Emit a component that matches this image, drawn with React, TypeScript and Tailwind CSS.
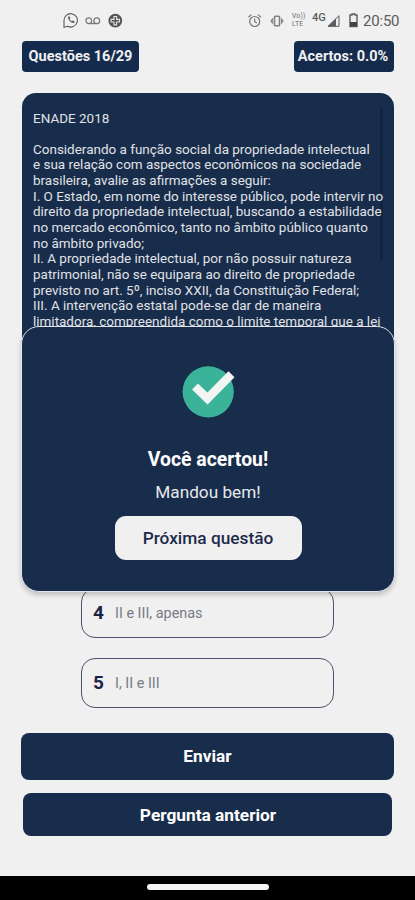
import { FC } from 'react';

const QUESTION_LINES = [
  'ENADE 2018',
  '',
  'Considerando a função social da propriedade intelectual',
  'e sua relação com aspectos econômicos na sociedade',
  'brasileira, avalie as afirmações a seguir:',
  'I. O Estado, em nome do interesse público, pode intervir no',
  'direito da propriedade intelectual, buscando a estabilidade',
  'no mercado econômico, tanto no âmbito público quanto',
  'no âmbito privado;',
  'II. A propriedade intelectual, por não possuir natureza',
  'patrimonial, não se equipara ao direito de propriedade',
  'previsto no art. 5º, inciso XXII, da Constituição Federal;',
  'III. A intervenção estatal pode-se dar de maneira',
  'limitadora, compreendida como o limite temporal que a lei',
];

const StatusBar: FC = () => (
  <div className="flex h-[41px] shrink-0 pt-[12px] text-[#5c5c5c]">
    <svg className="ml-[63px] h-4 w-4" viewBox="0 0 16 16" fill="none" stroke="currentColor" strokeWidth="1.1">
      <path d="M1 15.300V8.500A6.700 6.700 0 1 1 4.600 14.300z" />
      <path d="M5.300 4.600c-.7 1.500.2 3.200 1.700 4.600s3.100 2.200 4.400 1.300l.1-1.300-1.700-.8-.9.900C7.800 8.900 7 8 6.600 7.100l.8-.9-.7-1.700z" fill="currentColor" stroke="none" />
    </svg>
    <svg className="ml-[6px] h-4 w-4" viewBox="0 0 16 16" fill="none" stroke="#777" strokeWidth="1.2">
      <circle cx="3.800" cy="8.700" r="2.900" />
      <circle cx="11.800" cy="8.700" r="2.900" />
      <path d="M3.800 11.600h8" />
    </svg>
    <svg className="ml-[7px] h-4 w-4" viewBox="0 0 16 16">
      <circle cx="7.300" cy="8.700" r="6.900" fill="#555" />
      <g fill="none" stroke="#e4e4e4" strokeWidth="1.100">
        <path d="M6 4.500h2.600v2.900h2.900V10H8.600v2.900H6V10H3.100V7.400H6z" />
      </g>
    </svg>

    <svg className="ml-[123px] h-4 w-4" viewBox="0 0 16 16" fill="none" stroke="#777" strokeWidth="1.200">
      <circle cx="7.700" cy="9.500" r="5" />
      <path d="M7.700 6.500v3.200l2.200 1.300M1.500 5.200l2.900-2.600M13.900 5.200L11 2.600" />
    </svg>
    <svg className="ml-[6px] h-4 w-4" viewBox="0 0 16 16" fill="#8a8a8a" stroke="#808080" strokeWidth="1.200">
      <rect x="5.500" y="4.200" width="5" height="9.600" rx=".8" fill="none" strokeWidth="1.600" />
      <path d="M4 5.500v7L1.200 9zM12 5.500v7L14.800 9z" stroke="none" />
    </svg>
    <div className="ml-[7px] w-[17px] text-[6.8px] leading-[8px] tracking-[0.2px] text-[#6c6c6c]">
      <div>Vo))</div>
      <div>LTE</div>
    </div>
    <span className="ml-[3px] w-[15px] text-[11px] leading-[12px] font-medium">4G</span>
    <svg className="h-4 w-[13px]" viewBox="0 0 13 16">
      <path d="M12 3.700v10.600H1z" fill="none" stroke="currentColor" />
      <path d="M9 6.500v8H1z" fill="currentColor" />
    </svg>
    <svg className="ml-[9px] h-4 w-[9px]" viewBox="0 0 9 16">
      <path d="M3 3V2h3v1h2v11.500H1V3z" fill="none" stroke="currentColor" strokeWidth="1.400" />
      <path d="M1 10h7v4.500H1z" fill="#444" />
    </svg>
    <span className="ml-[5px] text-[15px] leading-[19px] tracking-[-0.2px]">20:50</span>
  </div>
);

interface AnswerProps {
  number: number;
  text: string;
}

const Answer: FC<AnswerProps> = ({ number, text }) => (
  <div className="flex h-[50px] w-[253px] items-center rounded-[14px] border border-[#4a536b] pt-px pl-[11px]">
    <span className="w-[22px] text-[19px] font-bold text-[#1d2145]">{number}</span>
    <span className="pt-px text-[14.4px] text-[#777b85]">{text}</span>
  </div>
);

const ResultModal: FC = () => (
  <div className="absolute top-[326px] left-[21px] z-20 flex h-[266px] w-[374px] flex-col items-center rounded-[18px] border-[1.5px] border-[#e4e4ee] bg-[#182d4b] pt-[39px] text-white shadow-[0_3px_5px_rgba(0,0,0,0.2)]">
    <svg className="h-[52px] w-[52px] overflow-visible" viewBox="0 0 52 52">
      <circle cx="26.200" cy="25.800" r="25.600" fill="#3bb39b" />
      <path d="M13 20.500L25.500 32.500 49.500 8.300" fill="none" stroke="#f3f5f4" strokeWidth="8.500" />
    </svg>
    <h2 className="mt-[29px] text-[19.4px] leading-[26px] font-bold">Você acertou!</h2>
    <p className="mt-[7px] text-[17.2px] leading-[24px] text-[#e6e8ec]">Mandou bem!</p>
    <button className="mt-[12px] h-[44px] w-[187px] rounded-[11px] bg-[#f0f0f1] pt-[2px] text-[17.3px] font-medium text-[#1d2b4b]">
      Próxima questão
    </button>
  </div>
);

export default function App() {
  return (
    <div className="relative flex h-[900px] w-[415px] flex-col overflow-hidden bg-[#f0f0f0] font-['Roboto',sans-serif]">
      <StatusBar />

      <div className="flex h-[31px] shrink-0 justify-between pr-[21px] pl-[22px] text-[14.5px] font-bold text-[#f0f0f0]">
        <div className="flex w-[117px] items-center justify-center rounded-[4px] bg-[#142b4d] pt-px">Questões 16/29</div>
        <div className="flex w-[100px] items-center justify-center rounded-[4px] bg-[#142b4d] pt-px pr-[2px]">Acertos: 0.0%</div>
      </div>

      <div className="mr-[21px] ml-[22px] mt-[21px] flex h-[260px] shrink-0 justify-between rounded-[14px] bg-[#182d4b] pt-[17.5px] pr-[11px] pl-[11px]">
        <div className="relative z-10 w-[346px] text-[13.47px] leading-[15.65px] whitespace-nowrap text-[#e0e2e6]">
          {QUESTION_LINES.map((line, i) => (
            <div key={i} className="h-[15.65px]">{line}</div>
          ))}
        </div>
        <div className="-mt-[2.5px] h-[153px] w-[3px] bg-[#122540]" />
      </div>

      <div className="mt-[235px] flex flex-col items-center gap-[20px]">
        <Answer number={4} text="II e III, apenas" />
        <Answer number={5} text="I, II e III" />
      </div>

      <div className="mt-[25px] flex flex-col items-center gap-[13px] text-[17.3px] font-bold text-white">
        <button className="h-[47px] w-[373px] rounded-[8px] bg-[#182d4b] pt-px">Enviar</button>
        <button className="h-[43px] w-[369px] rounded-[8px] bg-[#182d4b] pt-[2px] pl-px">Pergunta anterior</button>
      </div>

      <div className="mt-auto flex h-[24px] shrink-0 justify-center bg-black pt-[8px]">
        <div className="h-[6px] w-[122px] rounded-full bg-[#f5f5f5]" />
      </div>

      <ResultModal />
    </div>
  );
}
